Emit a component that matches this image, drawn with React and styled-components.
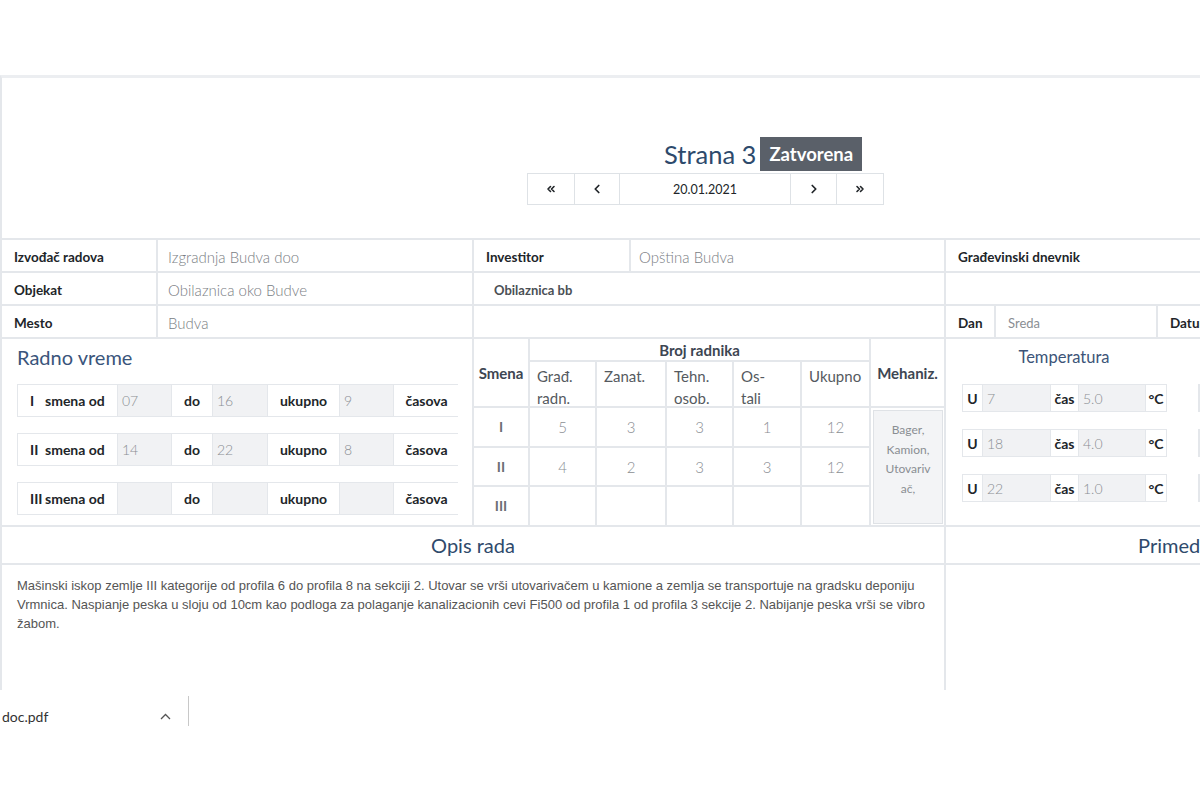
import React from 'react';
import styled, { createGlobalStyle } from 'styled-components';
import { ChevronsLeft, ChevronLeft, ChevronRight, ChevronsRight } from 'lucide-react';

const BORDER = '#e4e7eb';

const GlobalStyle = createGlobalStyle`
  html, body { margin: 0; padding: 0; background: #fff; }
  body { font-family: 'Lato', 'Open Sans', sans-serif; color: #212529; }
  * { box-sizing: border-box; }
`;

const Page = styled.div`
  width: 1200px;
  height: 800px;
  display: flex;
  flex-direction: column;
  overflow: hidden;
  background: #fff;
`;

const TopGap = styled.div`
  height: 75px;
  flex: none;
`;

const Viewport = styled.div`
  height: 615px;
  flex: none;
  border-top: 3px solid #eceef1;
  border-left: 2px solid ${BORDER};
  overflow: hidden;
`;

const Doc = styled.div`
  width: 1414px;
`;

const Header = styled.header`
  display: flex;
  flex-direction: column;
  align-items: flex-start;
  padding: 59px 0 33px;
`;

const TitleRow = styled.div`
  display: flex;
  align-items: center;
  height: 34px;
  margin-left: 662px;
`;

const Title = styled.h1`
  margin: 0;
  font-size: 25.5px;
  font-weight: 400;
  color: #2d4a6c;
  line-height: 34px;
`;

const Badge = styled.span`
  margin-left: 4px;
  height: 34px;
  padding: 0 9px;
  background: #5a6069;
  color: #fff;
  font-weight: 700;
  font-size: 18.5px;
  display: flex;
  align-items: center;
`;

const Pager = styled.nav`
  display: flex;
  margin: 2px 0 0 525px;
`;

const PageBtn = styled.button`
  width: ${(p) => p.$w}px;
  height: 32px;
  border: 1px solid #dee2e6;
  margin-left: -1px;
  background: #fff;
  font-family: inherit;
  font-size: 12.5px;
  font-weight: 400;
  color: #212529;
  display: flex;
  align-items: center;
  justify-content: center;
  padding: 0;
  &:first-child { margin-left: 0; }
`;

const Grid = styled.div`
  display: grid;
  grid-template-columns: 156px 316px 157px 315px 50px 162px 72px 1fr;
  grid-template-rows: 33px 33px 33px 188px 38px 160px;
  border-top: 2px solid ${BORDER};
`;

const Cell = styled.div`
  grid-column: span ${(p) => p.$span || 1};
  border-right: 2px solid ${BORDER};
  border-bottom: 2px solid ${BORDER};
  display: flex;
  align-items: center;
  padding: 2px ${(p) => p.$px ?? 12}px 0;
  min-width: 0;
  white-space: nowrap;
  overflow: hidden;
`;

const Label = styled.span`
  font-size: 13.5px;
  font-weight: 700;
  color: #212529;
`;

const Value = styled.span`
  font-size: 15px;
  font-weight: 300;
  color: #7a7e84;
`;

const SubValue = styled.span`
  font-size: 13px;
  font-weight: ${(p) => (p.$strong ? 700 : 400)};
  color: ${(p) => (p.$strong ? '#4a4f55' : '#8a8e93')};
`;

const Section = styled.div`
  grid-column: span ${(p) => p.$span};
  border-right: 2px solid ${BORDER};
  border-bottom: 2px solid ${BORDER};
  min-width: 0;
  overflow: hidden;
`;

const LeftSection = styled(Section)`
  padding: 4px 0 0 15px;
`;

const SectionTitle = styled.h2`
  margin: 0 0 13px;
  font-size: 20px;
  font-weight: 400;
  line-height: 28px;
  color: #3a557b;
`;

const ShiftGroup = styled.div`
  display: flex;
  width: 441px;
  height: 33px;
  margin-bottom: 16px;
  border: 1px solid ${BORDER};
`;

const Addon = styled.div`
  width: ${(p) => p.$w}px;
  flex: none;
  display: flex;
  align-items: center;
  justify-content: ${(p) => (p.$left ? 'flex-start' : 'center')};
  padding-left: ${(p) => (p.$left ? 12 : 0)}px;
  font-size: 14px;
  font-weight: 700;
  color: #212529;
  background: #fff;
  border-left: ${(p) => (p.$left ? 'none' : `1px solid ${BORDER}`)};
`;

const Field = styled.div`
  width: ${(p) => p.$w}px;
  flex: none;
  display: flex;
  align-items: center;
  padding-left: 4px;
  background: #f1f2f4;
  border-left: 1px solid ${BORDER};
  font-size: 14px;
  font-weight: 300;
  color: #8a8e93;
`;

const Numeral = styled.span`
  display: inline-block;
  width: 15px;
`;

const WorkerGrid = styled.div`
  display: grid;
  grid-template-columns: 54px 65px 68px 65px 66px 67px 1fr;
  grid-template-rows: 21px 44px 38px 37px 38px;
  gap: 2px;
  background: ${BORDER};
  height: 186px;
`;

const WCell = styled.div`
  background: #fff;
  grid-column: ${(p) => p.$col || 'auto'};
  grid-row: ${(p) => p.$row || 'auto'};
  display: flex;
  align-items: ${(p) => (p.$top ? 'flex-start' : 'center')};
  justify-content: ${(p) => (p.$top ? 'flex-start' : 'center')};
  padding: ${(p) => (p.$top ? '3px 7px 0' : '0')};
  font-size: 15px;
  line-height: 22px;
  font-weight: ${(p) => (p.$bold ? 700 : p.$light ? 300 : 400)};
  color: ${(p) => (p.$bold ? '#3d4652' : p.$light ? '#8a8e93' : '#555a60')};
`;

const Roman = styled(WCell)`
  font-size: 14px;
  font-weight: 700;
  color: #6c7075;
`;

const MechBox = styled.div`
  margin: 2px 1px 1px 2px;
  flex: 1;
  align-self: stretch;
  background: #f3f4f6;
  border: 1px solid #dfe2e6;
  padding-top: 9px;
  text-align: center;
  font-size: 12px;
  line-height: 19.5px;
  font-weight: 400;
  color: #8a8e93;
`;

const RightSection = styled(Section)`
  display: flex;
`;

const TempCol = styled.div`
  width: 236px;
  flex: none;
  padding: 4px 16px 0;
`;

const TempTitle = styled.h3`
  margin: 0 0 13px;
  height: 28px;
  font-size: 16.5px;
  font-weight: 400;
  line-height: 28px;
  text-align: center;
  color: #3c5478;
`;

const TempGroup = styled.div`
  display: flex;
  width: 205px;
  height: 28px;
  margin-bottom: 17px;
  border: 1px solid ${BORDER};
`;

const TempAddon = styled.div`
  width: ${(p) => p.$w}px;
  flex: none;
  display: flex;
  align-items: center;
  justify-content: center;
  font-size: 14px;
  font-weight: 700;
  color: #212529;
  border-left: ${(p) => (p.$first ? 'none' : `1px solid ${BORDER}`)};
`;

const HeadCell = styled(Cell)`
  justify-content: center;
  padding: 0;
`;

const BigHeading = styled.h2`
  margin: 0;
  font-size: 20px;
  font-weight: 400;
  color: #2f4a6c;
`;

const TextCell = styled(Cell)`
  align-items: flex-start;
  padding: 11px 15px 0;
  white-space: normal;
`;

const Description = styled.p`
  margin: 0;
  font-family: 'Liberation Sans', Arial, sans-serif;
  font-size: 13px;
  line-height: 19px;
  color: #555;
`;

const DownloadBar = styled.div`
  flex: 1;
  display: flex;
  align-items: flex-start;
  padding-top: 6px;
`;

const DlItem = styled.div`
  display: flex;
  align-items: center;
  justify-content: space-between;
  width: 189px;
  height: 30px;
  padding: 11px 17px 0 2px;
  border-right: 1px solid #c8c8c8;
  font-size: 14px;
  color: #333;
`;

const shifts = [
  { n: 'I', od: '07', do: '16', uk: '9' },
  { n: 'II', od: '14', do: '22', uk: '8' },
  { n: 'III', od: '', do: '', uk: '' },
];

const temps = [
  { u: '7', t: '5.0' },
  { u: '18', t: '4.0' },
  { u: '22', t: '1.0' },
];

const workers = [
  ['I', '5', '3', '3', '1', '12'],
  ['II', '4', '2', '3', '3', '12'],
  ['III', '', '', '', '', ''],
];

function Chevron() {
  return (
    <svg width="11" height="7" viewBox="0 0 11 7" fill="none">
      <polyline points="1,6 5.5,1.5 10,6" stroke="#555" strokeWidth="1.3" />
    </svg>
  );
}

export default function App() {
  return (
    <Page>
      <GlobalStyle />
      <TopGap />
      <Viewport>
        <Doc>
          <Header>
            <TitleRow>
              <Title>Strana 3</Title>
              <Badge>Zatvorena</Badge>
            </TitleRow>
            <Pager>
              <PageBtn $w={48} aria-label="prva"><ChevronsLeft size={12} strokeWidth={3.2} /></PageBtn>
              <PageBtn $w={46} aria-label="prethodna"><ChevronLeft size={14} strokeWidth={3} /></PageBtn>
              <PageBtn $w={172}>20.01.2021</PageBtn>
              <PageBtn $w={47} aria-label="sledeća"><ChevronRight size={14} strokeWidth={3} /></PageBtn>
              <PageBtn $w={48} aria-label="poslednja"><ChevronsRight size={12} strokeWidth={3.2} /></PageBtn>
            </Pager>
          </Header>

          <Grid>
            <Cell><Label>Izvođač radova</Label></Cell>
            <Cell $px={10}><Value>Izgradnja Budva doo</Value></Cell>
            <Cell><Label>Investitor</Label></Cell>
            <Cell $px={8}><Value>Opština Budva</Value></Cell>
            <Cell $span={4}><Label>Građevinski dnevnik</Label></Cell>

            <Cell><Label>Objekat</Label></Cell>
            <Cell $px={10}><Value>Obilaznica oko Budve</Value></Cell>
            <Cell $span={2} $px={20}><SubValue $strong>Obilaznica bb</SubValue></Cell>
            <Cell $span={4} />

            <Cell><Label>Mesto</Label></Cell>
            <Cell $px={10}><Value>Budva</Value></Cell>
            <Cell $span={2} />
            <Cell><Label>Dan</Label></Cell>
            <Cell><SubValue>Sreda</SubValue></Cell>
            <Cell><Label>Datum</Label></Cell>
            <Cell><SubValue>20.01.2021</SubValue></Cell>

            <LeftSection $span={2}>
              <SectionTitle>Radno vreme</SectionTitle>
              {shifts.map((s) => (
                <ShiftGroup key={s.n}>
                  <Addon $w={99} $left><Numeral>{s.n}</Numeral>smena od</Addon>
                  <Field $w={54}>{s.od}</Field>
                  <Addon $w={41}>do</Addon>
                  <Field $w={55}>{s.do}</Field>
                  <Addon $w={72}>ukupno</Addon>
                  <Field $w={54}>{s.uk}</Field>
                  <Addon $w={66}>časova</Addon>
                </ShiftGroup>
              ))}
            </LeftSection>

            <Section $span={2}>
              <WorkerGrid>
                <WCell $col="1" $row="1 / span 2" $bold>Smena</WCell>
                <WCell $col="2 / span 5" $row="1" $bold>Broj radnika</WCell>
                <WCell $col="7" $row="1 / span 2" $bold>Mehaniz.</WCell>
                <WCell $col="2" $row="2" $top>Građ.<br />radn.</WCell>
                <WCell $col="3" $row="2" $top>Zanat.</WCell>
                <WCell $col="4" $row="2" $top>Tehn.<br />osob.</WCell>
                <WCell $col="5" $row="2" $top>Os-<br />tali</WCell>
                <WCell $col="6" $row="2" $top>Ukupno</WCell>
                {workers.map((r, i) => (
                  <React.Fragment key={r[0]}>
                    <Roman $col="1" $row={`${i + 3}`}>{r[0]}</Roman>
                    {r.slice(1).map((v, j) => (
                      <WCell key={j} $col={`${j + 2}`} $row={`${i + 3}`} $light>{v}</WCell>
                    ))}
                  </React.Fragment>
                ))}
                <WCell $col="7" $row="3 / span 3">
                  <MechBox>Bager,<br />Kamion,<br />Utovariv<br />ač,</MechBox>
                </WCell>
              </WorkerGrid>
            </Section>

            <RightSection $span={4}>
              <TempCol>
                <TempTitle>Temperatura</TempTitle>
                {temps.map((t) => (
                  <TempGroup key={t.u}>
                    <TempAddon $w={19} $first>U</TempAddon>
                    <Field $w={68}>{t.u}</Field>
                    <TempAddon $w={28}>čas</TempAddon>
                    <Field $w={67}>{t.t}</Field>
                    <TempAddon $w={21}>°C</TempAddon>
                  </TempGroup>
                ))}
              </TempCol>
              <TempCol>
                <TempTitle />
                {temps.map((t) => (
                  <TempGroup key={t.u}>
                    <Field $w={203} />
                  </TempGroup>
                ))}
              </TempCol>
            </RightSection>

            <HeadCell $span={4}><BigHeading>Opis rada</BigHeading></HeadCell>
            <HeadCell $span={4}><BigHeading>Primedbe</BigHeading></HeadCell>

            <TextCell $span={4}>
              <Description>
                Mašinski iskop zemlje III kategorije od profila 6 do profila 8 na sekciji 2. Utovar se vrši utovarivačem u kamione a zemlja se transportuje na gradsku deponiju Vrmnica. Naspianje peska u sloju od 10cm kao podloga za polaganje kanalizacionih cevi Fi500 od profila 1 od profila 3 sekcije 2. Nabijanje peska vrši se vibro žabom.
              </Description>
            </TextCell>
            <TextCell $span={4} />
          </Grid>
        </Doc>
      </Viewport>
      <DownloadBar>
        <DlItem>
          <span>doc.pdf</span>
          <Chevron />
        </DlItem>
      </DownloadBar>
    </Page>
  );
}
